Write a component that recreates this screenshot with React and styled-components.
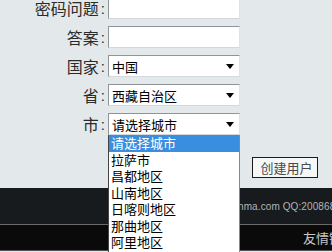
import React from "react";
import styled, { createGlobalStyle } from "styled-components";

const Global = createGlobalStyle`
  html, body { margin: 0; padding: 0; }
  body {
    background: #e3e9eb;
    width: 332px;
    height: 252px;
    overflow: hidden;
    font-family: "Noto Sans CJK SC", "Liberation Sans", sans-serif;
  }
`;

const Page = styled.div`
  width: 332px;
  height: 252px;
  display: flex;
  flex-direction: column;
  overflow: hidden;
`;

const Form = styled.div`
  display: grid;
  grid-template-columns: 105px 132px;
  grid-auto-rows: 22px;
  column-gap: 3px;
  row-gap: 7px;
  margin-top: -3px;
`;

const Label = styled.div`
  display: flex;
  align-items: center;
  justify-content: flex-end;
  font-size: 16px;
  color: #2b2b2b;
  white-space: nowrap;
`;

const Colon = styled.span`
  font-family: "Liberation Sans", sans-serif;
  font-size: 15px;
  margin-left: 2px;
`;

const TextInput = styled.input`
  box-sizing: border-box;
  width: 132px;
  height: 22px;
  margin: 0;
  padding: 0 3px;
  background: #ffffff;
  border: 1px solid;
  border-color: #8e9498 #dfe3e5 #d3d8db #8e9498;
  outline: none;
`;

const SelectWrap = styled.div`
  position: relative;
  width: 132px;
  height: 22px;
`;

const SelectBox = styled.div`
  box-sizing: border-box;
  width: 100%;
  height: 100%;
  display: flex;
  align-items: center;
  justify-content: space-between;
  padding: 0 5px 0 3px;
  background: #ffffff;
  border: 1px solid;
  border-color: #8e9498 #dfe3e5 #d3d8db #8e9498;
  font-size: 13px;
  color: #000;
`;

const Arrow = styled.svg`
  width: 8px;
  height: 5px;
  flex: none;
`;

const List = styled.div`
  position: absolute;
  top: 100%;
  left: 0;
  width: 132px;
  box-sizing: border-box;
  background: #ffffff;
  border-left: 1px solid #444;
  border-right: 1px solid #888;
  z-index: 5;
`;

const Option = styled.div`
  height: 16.5px;
  line-height: 16.5px;
  padding-left: 2px;
  font-size: 13px;
  white-space: nowrap;
  color: ${(p) => (p.$active ? "#ffffff" : "#000000")};
  background: ${(p) => (p.$active ? "#3a8ee0" : "transparent")};
`;

const ButtonRow = styled.div`
  display: flex;
  padding-left: 252px;
  margin-top: 22px;
`;

const Button = styled.button`
  box-sizing: border-box;
  width: 66px;
  height: 21px;
  margin: 0;
  padding: 0 0 0 3px;
  background: #f6f8f8;
  border: 1px solid #1c1c1c;
  font-family: "Noto Sans CJK SC", sans-serif;
  font-size: 13px;
  line-height: 19px;
  color: #4a4a4a;
`;

const Footer = styled.div`
  margin-top: 10px;
  display: flex;
  flex-direction: column;
`;

const FooterTop = styled.div`
  height: 36px;
  display: flex;
  align-items: center;
  padding-left: 238px;
  background: #171b1e;
  color: #b4b4b4;
  font-family: "Liberation Sans", sans-serif;
  font-size: 10px;
  letter-spacing: 0.1px;
  white-space: nowrap;
`;

const FooterBottom = styled.div`
  height: 25px;
  display: flex;
  align-items: center;
  padding-left: 303px;
  background: #0a0a0a;
  border-top: 1px solid #6a6a6a;
  border-bottom: 1px solid #555;
  color: #c8c8c8;
  font-size: 13px;
  white-space: nowrap;
`;

const Caret = () => (
  <Arrow viewBox="0 0 8 5">
    <path d="M0 0 H8 L4 5 Z" fill="#000" />
  </Arrow>
);

const Select = ({ value, open, options }) => (
  <SelectWrap>
    <SelectBox>
      <span>{value}</span>
      <Caret />
    </SelectBox>
    {open && (
      <List>
        {options.map((o, i) => (
          <Option key={o} $active={i === 0}>
            {o}
          </Option>
        ))}
      </List>
    )}
  </SelectWrap>
);

const cities = [
  "请选择城市",
  "拉萨市",
  "昌都地区",
  "山南地区",
  "日喀则地区",
  "那曲地区",
  "阿里地区",
  "林芝地区",
];

export default function App() {
  return (
    <Page>
      <Global />
      <Form>
        <Label>密码问题<Colon>:</Colon></Label>
        <TextInput />
        <Label>答案<Colon>:</Colon></Label>
        <TextInput />
        <Label>国家<Colon>:</Colon></Label>
        <Select value="中国" />
        <Label>省<Colon>:</Colon></Label>
        <Select value="西藏自治区" />
        <Label>市<Colon>:</Colon></Label>
        <Select value="请选择城市" open options={cities} />
      </Form>
      <ButtonRow>
        <Button>创建用户</Button>
      </ButtonRow>
      <Footer>
        <FooterTop>nma.com QQ:200868888</FooterTop>
        <FooterBottom>友情链接</FooterBottom>
      </Footer>
    </Page>
  );
}
